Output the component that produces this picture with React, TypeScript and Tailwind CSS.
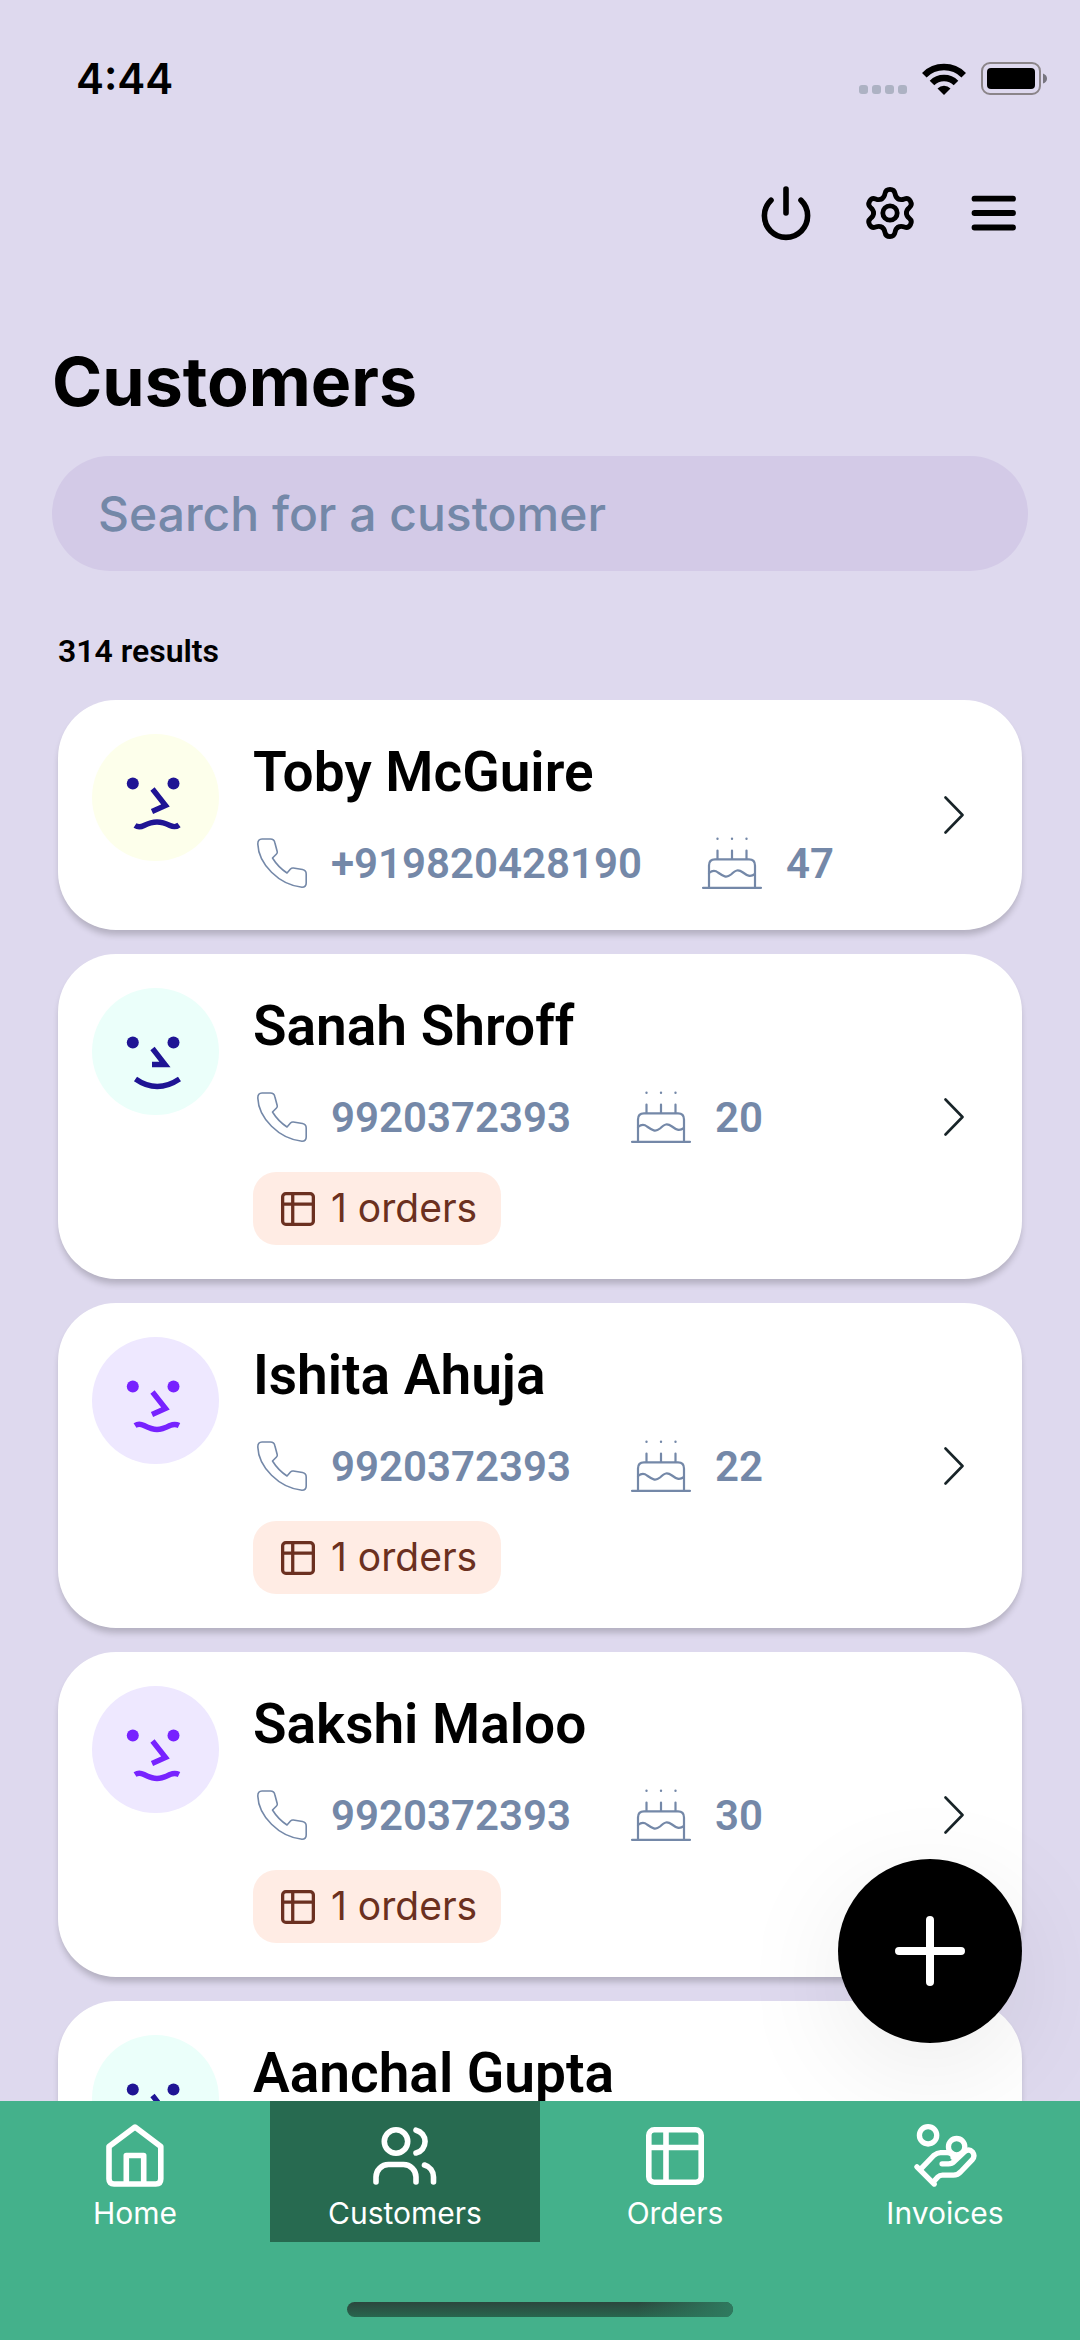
import type { ReactNode } from "react";

type Mood = "frown" | "smile" | "smirk";

interface Customer {
  name: string;
  phone?: string;
  age?: number;
  orders?: number;
  mood: Mood;
  avatar: string;
}

const customers: Customer[] = [
  { name: "Toby McGuire", phone: "+919820428190", age: 47, mood: "frown", avatar: "bg-[#fdffeb] text-[#1f1494]" },
  { name: "Sanah Shroff", phone: "9920372393", age: 20, orders: 1, mood: "smile", avatar: "bg-[#ebfffa] text-[#1f1494]" },
  { name: "Ishita Ahuja", phone: "9920372393", age: 22, orders: 1, mood: "smirk", avatar: "bg-[#eee8ff] text-[#7722ff]" },
  { name: "Sakshi Maloo", phone: "9920372393", age: 30, orders: 1, mood: "smirk", avatar: "bg-[#eee8ff] text-[#7722ff]" },
  { name: "Aanchal Gupta", mood: "smile", avatar: "bg-[#ebfffa] text-[#1f1494]" },
];

const mouths: Record<Mood, string> = {
  frown: "M43 91.5Q47 94 52 91.5C57 89 60 88 65 88S73 89 78 91.5Q83 94 87 91",
  smile: "M43.500 91Q65 106 87.500 91",
  smirk: "M43 88.500Q47 86 52 88.500C57 91 60 92.500 65 92.500S73 91 78 88.500Q83 86.500 87 88.500",
};

function Face({ mood }: { mood: Mood }) {
  const smile = mood === "smile";
  return (
    <svg viewBox="0 0 127 127" className="size-full" fill="none" stroke="currentColor" strokeWidth="5.400" aria-hidden="true">
      <circle cx="40.800" cy={smile ? 54.5 : 49.5} r="6" fill="currentColor" stroke="none" />
      <circle cx="81.500" cy={smile ? 54.5 : 49.5} r="6" fill="currentColor" stroke="none" />
      <path d={smile ? "M60.5 60.5L73 76.5H60" : "M60.5 55L73.5 71.500L60 77.500"} />
      <path d={mouths[mood]} />
    </svg>
  );
}

function PowerIcon() {
  return (
    <svg viewBox="0 0 60 60" className="size-[60px]" fill="none" stroke="currentColor" strokeWidth="5.600" strokeLinecap="round" aria-hidden="true">
      <path d="M30 6V30M15 17.200A21.600 21.600 0 1 0 45 17.200" />
    </svg>
  );
}

function GearIcon() {
  const lobe = "M-8.200 -14.200C-5.600 -15.700 -5.300 -17.500 -5 -19.500C-4.500 -22.500 -2.500 -23.600 0 -23.600S4.500 -22.500 5 -19.500C5.300 -17.500 5.600 -15.700 8.200 -14.200";
  return (
    <svg viewBox="-30 -30 60 60" className="size-[60px]" fill="none" stroke="currentColor" strokeWidth="4.800" strokeLinecap="round" aria-hidden="true">
      <circle r="7.200" />
      {[0, 60, 120, 180, 240, 300].map((angle) => (
        <path key={angle} d={lobe} transform={`rotate(${angle})`} />
      ))}
    </svg>
  );
}

function MenuIcon() {
  return (
    <svg viewBox="0 0 60 60" className="size-[60px]" fill="none" stroke="currentColor" strokeWidth="5.800" strokeLinecap="round" aria-hidden="true">
      <path d="M10.500 15.700H49M10.500 30H49M10.500 44.500H49" />
    </svg>
  );
}

function PhoneIcon() {
  return (
    <svg viewBox="0 0 50 50" className="size-[50px]" fill="none" stroke="currentColor" strokeWidth="1.600" strokeLinejoin="round" aria-hidden="true">
      <path d="M5 1H13.500Q17 1 17.800 4.500L20.200 13.500Q20.600 15 19.500 16L15.500 20Q21 29 30 35L33.500 31Q34.700 29.800 36.300 30L45.500 31.500Q49.200 32.200 49.200 36V45Q49.200 49.200 45 49.200C22 47 1.500 26 .8 6Q.8 1 5 1Z" />
    </svg>
  );
}

function CakeIcon() {
  return (
    <svg viewBox="0 0 60 52" className="h-[52px] w-[60px]" fill="none" stroke="currentColor" strokeWidth="2.200" strokeLinecap="round" aria-hidden="true">
      <path d="M1 50.800H59M7 50V28.500Q7 22.300 13 22.300H47Q53 22.300 53 28.500V50" />
      <path d="M15.500 13.500V22M30 13.500V22M44.500 13.500V22" />
      <path d="M15.500 1.800h.01M30 1.800h.01M44.500 1.800h.01" strokeWidth="2.400" />
      <path d="M7 36C10 33.500 13 33 16 35.500C21 39 24 41.500 29 37.500C34 33 36 32 41 35.500C45 38.500 48 40.500 53 37" />
    </svg>
  );
}

function GridIcon({ className, stroke }: { className: string; stroke: number }) {
  const a = stroke / 2;
  return (
    <svg viewBox="0 0 58 58" className={className} fill="none" stroke="currentColor" strokeWidth={stroke} aria-hidden="true">
      <rect x={a} y={a} width={58 - stroke} height={58 - stroke} rx="5.500" />
      <path d="M20 2V56M2 20.500H56" />
    </svg>
  );
}

function HomeIcon() {
  return (
    <svg viewBox="0 0 58 63" className="h-[63px] w-[58px]" fill="none" stroke="currentColor" strokeWidth="5.600" strokeLinejoin="round" aria-hidden="true">
      <path d="M29 3L54.800 22.500V55Q54.800 60 49.800 60H8Q3 60 3 55V22.500Z" />
      <path d="M20.300 60V31.500H37.700V60" />
    </svg>
  );
}

function UsersIcon() {
  return (
    <svg viewBox="0 0 64 58" className="h-[58px] w-[64px]" fill="none" stroke="currentColor" strokeWidth="5.600" strokeLinecap="round" aria-hidden="true">
      <circle cx="23" cy="14.500" r="11.700" />
      <path d="M43 3.200A11.700 11.700 0 0 1 43 26" />
      <path d="M3 55V50A12.500 12.500 0 0 1 15.500 37.500H30.500A12.500 12.500 0 0 1 43 50V55" />
      <path d="M51.500 38A12.500 12.500 0 0 1 60.500 50V55" />
    </svg>
  );
}

function HandCoinsIcon() {
  return (
    <svg viewBox="0 0 64 64" className="size-[63px]" fill="none" stroke="currentColor" strokeWidth="5.400" strokeLinecap="round" strokeLinejoin="round" aria-hidden="true">
      <circle cx="14.300" cy="11.500" r="8.800" />
      <circle cx="43.300" cy="23" r="8.300" />
      <path d="M3 43.500L20.500 61" />
      <path d="M7.500 45L20 32Q23.500 29 27 29H34Q40 29.500 39.700 34" />
      <path d="M28.500 40.500H35Q38.500 40.500 41 38L51.500 28Q56 24.500 59.500 28.500Q62.500 32.500 59 36.500L48 48Q44.500 52 40 52H29Q26 52 24 54L20.500 58" />
    </svg>
  );
}

function ChevronIcon() {
  return (
    <svg viewBox="0 0 20 38" className="h-[38px] w-[20px]" fill="none" stroke="#182428" strokeWidth="2.600" strokeLinecap="round" strokeLinejoin="round" aria-hidden="true">
      <path d="M1.500 1.500L18.500 19L1.500 36.500" />
    </svg>
  );
}

function StatusBar() {
  return (
    <div className="flex items-center justify-between pt-[52px] pr-[33px] pl-[76px]">
      <time className="font-[Inter] text-[42px] leading-[53px] font-semibold">4:44</time>
      <div className="flex items-center gap-[15px]">
        <div className="flex gap-[4px] pt-[22px]">
          <span className="size-[9px] rounded-[3px] bg-[#adb2c3]" />
          <span className="size-[9px] rounded-[3px] bg-[#adb2c3]" />
          <span className="size-[9px] rounded-[3px] bg-[#adb2c3]" />
          <span className="size-[9px] rounded-[3px] bg-[#adb2c3]" />
        </div>
        <svg viewBox="0 0 44 32" className="h-[32px] w-[44px]" aria-hidden="true">
          <g fill="none" stroke="#000" strokeWidth="6.500">
            <path d="M2.300 12.200A28 28 0 0 1 41.700 12.200" />
            <path d="M10 20A17 17 0 0 1 34 20" />
          </g>
          <path d="M22 32L15.500 25.500A9.200 9.200 0 0 1 28.500 25.500Z" />
        </svg>
        <svg viewBox="0 0 66 33" className="h-[33px] w-[66px]" aria-hidden="true">
          <rect x="1" y="1" width="58" height="31" rx="8" fill="none" stroke="#8b8589" strokeWidth="2" />
          <rect x="6" y="6" width="48" height="21" rx="4" />
          <path d="M62 11.500Q66 13 66 16.500T62 21.500Z" fill="#77757f" />
        </svg>
      </div>
    </div>
  );
}

function CustomerCard({ customer }: { customer: Customer }) {
  return (
    <li>
      <a
        href="#customer"
        className={`flex items-center rounded-[58px] bg-white py-[34px] pr-[58px] pl-[34px] shadow-[0_6px_6px_-1px_rgba(0,0,0,0.19)] ${customer.phone === undefined ? "min-h-[325px]" : ""}`}
      >
        <div className={`size-[127px] shrink-0 self-start overflow-hidden rounded-full ${customer.avatar}`}>
          <Face mood={customer.mood} />
        </div>
        <div className="ml-[34px] flex min-w-0 flex-1 flex-col items-start self-start">
          <h2 className="text-[55px] leading-[76px] font-semibold whitespace-nowrap text-black">{customer.name}</h2>
          {customer.phone !== undefined && (
            <div className="mt-5 flex h-[66px] items-center pl-1 text-[42px] font-semibold text-[#7488a8]">
              <PhoneIcon />
              <span className="ml-6">{customer.phone}</span>
              <span className="ml-[60px] flex items-center gap-6">
                <CakeIcon />
                {customer.age}
              </span>
            </div>
          )}
          {customer.orders !== undefined && (
            <div className="mt-[22px] flex h-[73px] items-center gap-4 rounded-[23px] bg-[#ffece4] pr-6 pl-7 font-[Inter] text-[39px] text-[#6b3020]">
              <GridIcon className="size-[34px]" stroke={5.6} />
              <span>{customer.orders} orders</span>
            </div>
          )}
        </div>
        <ChevronIcon />
      </a>
    </li>
  );
}

function Tab({ label, icon, active = false }: { label: string; icon: ReactNode; active?: boolean }) {
  return (
    <a
      href={`#${label.toLowerCase()}`}
      aria-current={active ? "page" : undefined}
      className={`flex flex-1 flex-col items-center gap-2 pt-[23px] pb-[11px] text-white ${active ? "bg-[#276a50]" : ""}`}
    >
      <span className="flex h-[63px] items-center">{icon}</span>
      <span className="font-[Inter] text-[30px] leading-[36px]">{label}</span>
    </a>
  );
}

export default function App() {
  return (
    <div className="flex h-screen flex-col overflow-hidden bg-[#ded9ee] font-[Roboto,sans-serif] text-black">
      <header className="shrink-0">
        <StatusBar />
        <div className="mt-[78px] flex justify-end gap-[44px] pr-[56px]">
          <button type="button" aria-label="Log out"><PowerIcon /></button>
          <button type="button" aria-label="Settings"><GearIcon /></button>
          <button type="button" aria-label="Menu"><MenuIcon /></button>
        </div>
        <div className="mt-[98px] px-[52px]">
          <h1 className="font-[Inter] text-[68px] leading-[80px] font-bold">Customers</h1>
          <input
            type="search"
            aria-label="Search for a customer"
            placeholder="Search for a customer"
            className="mt-[35px] block h-[115px] w-full rounded-full bg-[#d3cae7] px-[46px] font-[Inter] text-[48px] font-medium outline-none placeholder:text-[#7488a8]"
          />
        </div>
        <p className="mt-[60px] px-[58px] text-[32px] leading-[40px] font-semibold">314 results</p>
      </header>

      <main className="relative min-h-0 flex-1">
        <div className="h-full overflow-hidden px-[58px] pt-[29px]">
          <ul className="flex flex-col gap-6">
            {customers.map((customer) => (
              <CustomerCard key={customer.name} customer={customer} />
            ))}
          </ul>
        </div>
        <button
          type="button"
          aria-label="Add customer"
          className="absolute right-[58px] bottom-[58px] flex size-[184px] items-center justify-center rounded-full bg-black shadow-[0_29px_115px_rgba(0,0,0,0.08)]"
        >
          <svg viewBox="0 0 70 70" className="size-[70px]" stroke="#fff" strokeWidth="8" strokeLinecap="round" aria-hidden="true">
            <path d="M35 4V66M4 35H66" />
          </svg>
        </button>
      </main>

      <nav className="relative z-10 shrink-0 bg-[#44b18b]">
        <div className="flex">
          <Tab label="Home" icon={<HomeIcon />} />
          <Tab label="Customers" icon={<UsersIcon />} active />
          <Tab label="Orders" icon={<GridIcon className="size-[58px]" stroke={5.6} />} />
          <Tab label="Invoices" icon={<HandCoinsIcon />} />
        </div>
        <div className="flex justify-center pt-[60px] pb-[23px]">
          <div className="h-[15px] w-[386px] rounded-full bg-linear-to-b from-[#2b473e] to-[#27664e]">
            <div className="ml-auto h-full w-1/4 rounded-full bg-linear-to-r from-[#2f7a5f]/0 to-[#2f7a5f]" />
          </div>
        </div>
      </nav>
    </div>
  );
}
